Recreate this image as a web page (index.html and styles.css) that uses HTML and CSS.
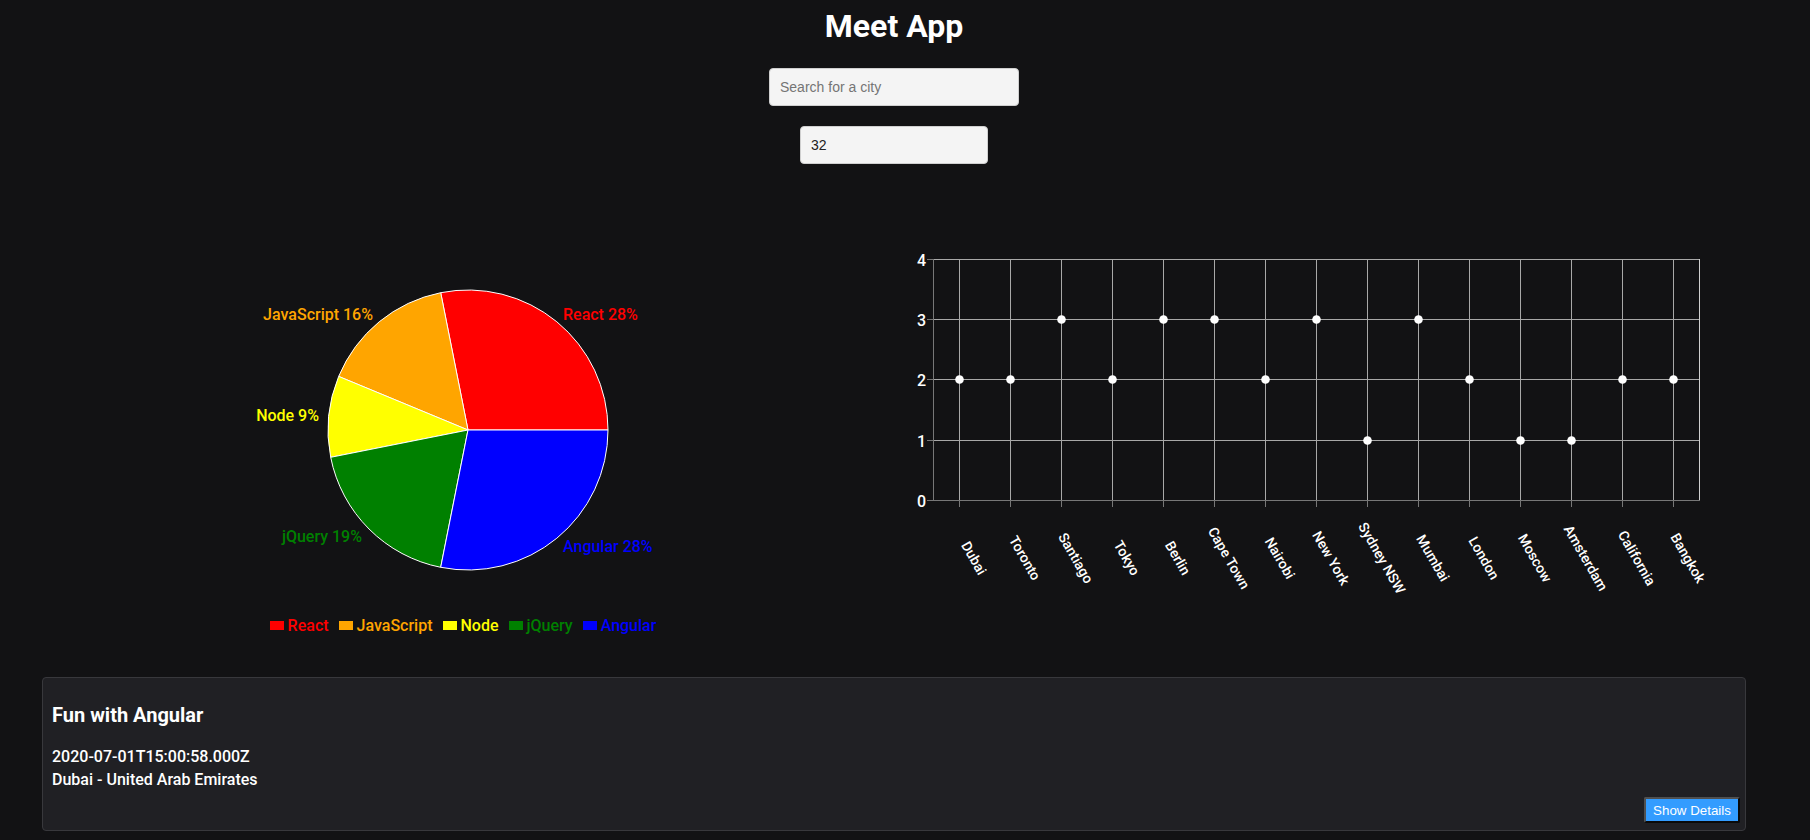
FILE: index.html
```html
<!DOCTYPE html>
<html lang="en">
<head>
<meta charset="utf-8">
<title>Meet App</title>
<link rel="stylesheet" href="styles.css">
</head>
<body>
<div class="page">
  <h1 class="title">Meet App</h1>
  <div class="city-search">
    <input class="city-input" type="text" placeholder="Search for a city">
  </div>
  <div class="number-events">
    <input class="number-input" type="number" value="32">
  </div>

  <div class="charts">
    <div class="chart-col">
      <svg class="pie" width="852" height="410" viewBox="0 0 852 410">
        <g stroke="#fff" stroke-width="1">
          <path d="M426,230 L566,230 A140,140 0 0 0 398.69,92.69 Z" fill="#ff0000"/>
          <path d="M426,230 L398.69,92.69 A140,140 0 0 0 296.66,176.42 Z" fill="#ffa500"/>
          <path d="M426,230 L296.66,176.42 A140,140 0 0 0 288.69,257.31 Z" fill="#ffff00"/>
          <path d="M426,230 L288.69,257.31 A140,140 0 0 0 398.69,367.31 Z" fill="#008000"/>
          <path d="M426,230 L398.69,367.31 A140,140 0 0 0 566,230 Z" fill="#0000ff"/>
        </g>
        <g class="pie-labels">
          <text x="521" y="114" text-anchor="start" fill="#ff0000">React 28%</text>
          <text x="331" y="114" text-anchor="end" fill="#ffa500">JavaScript 16%</text>
          <text x="277" y="215" text-anchor="end" fill="#ffff00">Node 9%</text>
          <text x="320" y="336" text-anchor="end" fill="#008000">jQuery 19%</text>
          <text x="521" y="346" text-anchor="start" fill="#0000ff">Angular 28%</text>
        </g>
      </svg>
      <ul class="legend">
        <li class="legend-item react"><span class="swatch"></span>React</li>
        <li class="legend-item js"><span class="swatch"></span>JavaScript</li>
        <li class="legend-item node"><span class="swatch"></span>Node</li>
        <li class="legend-item jquery"><span class="swatch"></span>jQuery</li>
        <li class="legend-item angular"><span class="swatch"></span>Angular</li>
      </ul>
    </div>

    <div class="chart-col">
      <svg class="scatter" width="852" height="440" viewBox="0 0 852 440">
        <g class="grid" stroke="#a8a8a8" stroke-width="1">
          <line x1="39" y1="59.5" x2="805" y2="59.5"/>
          <line x1="39" y1="119.5" x2="805" y2="119.5"/>
          <line x1="39" y1="179.5" x2="805" y2="179.5"/>
          <line x1="39" y1="240.5" x2="805" y2="240.5"/>
          <line x1="65.5" y1="59" x2="65.5" y2="300"/>
          <line x1="116.5" y1="59" x2="116.5" y2="300"/>
          <line x1="167.5" y1="59" x2="167.5" y2="300"/>
          <line x1="218.5" y1="59" x2="218.5" y2="300"/>
          <line x1="269.5" y1="59" x2="269.5" y2="300"/>
          <line x1="320.5" y1="59" x2="320.5" y2="300"/>
          <line x1="371.5" y1="59" x2="371.5" y2="300"/>
          <line x1="422.5" y1="59" x2="422.5" y2="300"/>
          <line x1="473.5" y1="59" x2="473.5" y2="300"/>
          <line x1="524.5" y1="59" x2="524.5" y2="300"/>
          <line x1="575.5" y1="59" x2="575.5" y2="300"/>
          <line x1="626.5" y1="59" x2="626.5" y2="300"/>
          <line x1="677.5" y1="59" x2="677.5" y2="300"/>
          <line x1="728.5" y1="59" x2="728.5" y2="300"/>
          <line x1="779.5" y1="59" x2="779.5" y2="300"/>
          <line x1="805.5" y1="59" x2="805.5" y2="300" stroke="#cfcfcf"/>
        </g>
        <g class="axis" stroke="#777" stroke-width="1">
          <line x1="39.5" y1="59" x2="39.5" y2="300.5"/>
          <line x1="39" y1="300.5" x2="806" y2="300.5"/>
          <line x1="33" y1="59.5" x2="39" y2="59.5"/>
          <line x1="33" y1="119.5" x2="39" y2="119.5"/>
          <line x1="33" y1="179.5" x2="39" y2="179.5"/>
          <line x1="33" y1="240.5" x2="39" y2="240.5"/>
          <line x1="33" y1="300.5" x2="39" y2="300.5"/>
          <line x1="65.5" y1="301" x2="65.5" y2="307"/>
          <line x1="116.5" y1="301" x2="116.5" y2="307"/>
          <line x1="167.5" y1="301" x2="167.5" y2="307"/>
          <line x1="218.5" y1="301" x2="218.5" y2="307"/>
          <line x1="269.5" y1="301" x2="269.5" y2="307"/>
          <line x1="320.5" y1="301" x2="320.5" y2="307"/>
          <line x1="371.5" y1="301" x2="371.5" y2="307"/>
          <line x1="422.5" y1="301" x2="422.5" y2="307"/>
          <line x1="473.5" y1="301" x2="473.5" y2="307"/>
          <line x1="524.5" y1="301" x2="524.5" y2="307"/>
          <line x1="575.5" y1="301" x2="575.5" y2="307"/>
          <line x1="626.5" y1="301" x2="626.5" y2="307"/>
          <line x1="677.5" y1="301" x2="677.5" y2="307"/>
          <line x1="728.5" y1="301" x2="728.5" y2="307"/>
          <line x1="779.5" y1="301" x2="779.5" y2="307"/>
        </g>
        <g class="y-labels">
          <text x="32" y="60">4</text>
          <text x="32" y="120">3</text>
          <text x="32" y="180">2</text>
          <text x="32" y="241">1</text>
          <text x="32" y="301">0</text>
        </g>
        <g class="dots" fill="#fff">
          <circle cx="65.5" cy="179.5" r="4.3"/>
          <circle cx="116.5" cy="179.5" r="4.3"/>
          <circle cx="167.5" cy="119.5" r="4.3"/>
          <circle cx="218.5" cy="179.5" r="4.3"/>
          <circle cx="269.5" cy="119.5" r="4.3"/>
          <circle cx="320.5" cy="119.5" r="4.3"/>
          <circle cx="371.5" cy="179.5" r="4.3"/>
          <circle cx="422.5" cy="119.5" r="4.3"/>
          <circle cx="473.5" cy="240.5" r="4.3"/>
          <circle cx="524.5" cy="119.5" r="4.3"/>
          <circle cx="575.5" cy="179.5" r="4.3"/>
          <circle cx="626.5" cy="240.5" r="4.3"/>
          <circle cx="677.5" cy="240.5" r="4.3"/>
          <circle cx="728.5" cy="179.5" r="4.3"/>
          <circle cx="779.5" cy="179.5" r="4.3"/>
        </g>
        <g class="x-labels">
          <text transform="translate(80,358) rotate(60)">Dubai</text>
          <text transform="translate(131,358) rotate(60)">Toronto</text>
          <text transform="translate(182,358) rotate(60)">Santiago</text>
          <text transform="translate(233,358) rotate(60)">Tokyo</text>
          <text transform="translate(284,358) rotate(60)">Berlin</text>
          <text transform="translate(335,358) rotate(60)">Cape Town</text>
          <text transform="translate(386,358) rotate(60)">Nairobi</text>
          <text transform="translate(437,358) rotate(60)">New York</text>
          <text transform="translate(488,358) rotate(60)">Sydney NSW</text>
          <text transform="translate(539,358) rotate(60)">Mumbai</text>
          <text transform="translate(590,358) rotate(60)">London</text>
          <text transform="translate(641,358) rotate(60)">Moscow</text>
          <text transform="translate(692,358) rotate(60)">Amsterdam</text>
          <text transform="translate(743,358) rotate(60)">California</text>
          <text transform="translate(794,358) rotate(60)">Bangkok</text>
        </g>
      </svg>
    </div>
  </div>

  <ul class="event-list">
    <li class="event">
      <h2 class="event-title">Fun with Angular</h2>
      <p class="event-line">2020-07-01T15:00:58.000Z</p>
      <p class="event-line">Dubai - United Arab Emirates</p>
      <button class="details-btn" type="button">Show Details</button>
    </li>
  </ul>
</div>
</body>
</html>
```

FILE: styles.css
```css
html, body {
  margin: 0;
  padding: 0;
  background: #121214;
  overflow: hidden;
  height: 840px;
}

.page {
  width: 1788px;
  padding-top: 8px;
  display: flex;
  flex-direction: column;
  align-items: center;
  font-family: Roboto, "Liberation Sans", sans-serif;
  color: #fff;
}

.title {
  margin: 0;
  font-size: 32px;
  font-weight: 700;
  line-height: 37.5px;
  color: #fff;
}

.city-search {
  margin-top: 22.5px;
}

.city-input,
.number-input {
  box-sizing: border-box;
  height: 38px;
  border: 1px solid #cfcfcf;
  border-radius: 4px;
  background: #f4f4f4;
  padding: 0 10px;
  font-family: "Liberation Sans", Arial, sans-serif;
  font-size: 14px;
  color: #222;
  outline: none;
  display: block;
}

.city-input {
  width: 250px;
}

.city-input::placeholder {
  color: #757575;
}

.number-events {
  margin-top: 20px;
}

.number-input {
  width: 188px;
  -moz-appearance: textfield;
}

.number-input::-webkit-inner-spin-button,
.number-input::-webkit-outer-spin-button {
  -webkit-appearance: none;
  margin: 0;
}

.charts {
  margin-top: 36px;
  width: 1704px;
  display: flex;
}

.chart-col {
  width: 852px;
  display: flex;
  flex-direction: column;
}

.pie,
.scatter {
  display: block;
}

.pie-labels text {
  font-size: 16px;
  font-weight: 500;
  dominant-baseline: central;
}

.legend {
  list-style: none;
  margin: 0;
  padding: 0;
  height: 30px;
  display: flex;
  align-items: center;
  justify-content: center;
  gap: 10px;
  font-size: 16px;
  font-weight: 500;
  transform: translateX(-5px);
}

.legend-item {
  display: flex;
  align-items: center;
}

.swatch {
  width: 14px;
  height: 9px;
  margin-right: 4px;
  margin-top: 1px;
}

.react { color: #ff0000; }
.react .swatch { background: #ff0000; }
.js { color: #ffa500; }
.js .swatch { background: #ffa500; }
.node { color: #ffff00; }
.node .swatch { background: #ffff00; }
.jquery { color: #008000; }
.jquery .swatch { background: #008000; }
.angular { color: #0000ff; }
.angular .swatch { background: #0000ff; }

.y-labels text {
  fill: #fff;
  font-size: 16px;
  font-weight: 500;
  text-anchor: end;
  dominant-baseline: central;
}

.x-labels text {
  fill: #fff;
  font-size: 14px;
  font-weight: 500;
  text-anchor: middle;
  dominant-baseline: central;
}

.event-list {
  list-style: none;
  margin: 37px 0 0;
  padding: 0;
  width: 1704px;
}

.event {
  box-sizing: border-box;
  height: 154px;
  background: #202024;
  border: 1px solid #38383c;
  border-radius: 4px;
  padding: 26px 5px 6px 9px;
  display: flex;
  flex-direction: column;
}

.event-title {
  margin: 0 0 17.6px;
  font-size: 20px;
  font-weight: 700;
  line-height: 23.4px;
  color: #fff;
}

.event-line {
  margin: 0;
  font-size: 16px;
  font-weight: 500;
  line-height: 23px;
  color: #fff;
}

.details-btn {
  align-self: flex-end;
  margin-top: 6px;
  box-sizing: border-box;
  height: 26px;
  width: 96px;
  padding: 0;
  background: #339cff;
  color: #fff;
  font-family: "Liberation Sans", Arial, sans-serif;
  font-size: 13.333px;
  border-width: 2px;
  border-style: solid;
  border-color: #505050 #0a0a0a #0a0a0a #505050;
  border-radius: 2px;
}
```
